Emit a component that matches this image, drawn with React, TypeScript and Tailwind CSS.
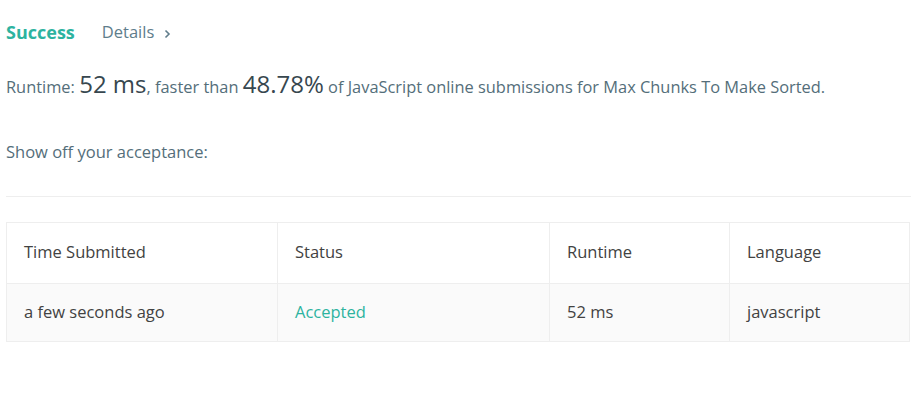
export default function App() {
  const cols = [
    { label: 'Time Submitted', value: 'a few seconds ago', w: 'w-[270px]' },
    { label: 'Status', value: 'Accepted', w: 'w-[272px]', accent: true },
    { label: 'Runtime', value: '52 ms', w: 'w-[180px]' },
    { label: 'Language', value: 'javascript', w: 'flex-1' },
  ]

  return (
    <div className="min-h-screen bg-white px-[6px] pt-[19px] font-['Open_Sans',sans-serif] text-[#546e7a]">
      <div className="flex items-center gap-[27px]">
        <span className="text-[18px] font-bold text-[#2db39f]">Success</span>
        <span className="flex items-center gap-[10px] text-[16.5px] text-[#607d8b]">
          Details
          <svg width="7" height="10" viewBox="0 0 7 10" className="mt-[2px]">
            <path d="M1.5 1.5 L5 5 L1.5 8.5" fill="none" stroke="#607d8b" strokeWidth="1.6" />
          </svg>
        </span>
      </div>

      <p className="mt-[23px] text-[16.4px] leading-[30px]">
        Runtime: <span className="text-[24px] text-[#37474f]">52 ms</span>, faster than{' '}
        <span className="text-[24px] text-[#37474f]">48.78%</span> of JavaScript online submissions for Max
        Chunks To Make Sorted.
      </p>

      <p className="mt-[38px] text-[16.5px]">Show off your acceptance:</p>

      <div className="mt-[31px] mr-[5px] border-t border-[#eeeeee]" />

      <div className="mt-[25px] mr-[6px] flex flex-col border border-[#eeeeee] text-[16.5px] text-[#424242]">
        <div className="flex h-[60px]">
          {cols.map((c, i) => (
            <div
              key={c.label}
              className={`${c.w} flex items-center pl-[17px] ${i > 0 ? 'border-l border-[#eeeeee]' : ''}`}
            >
              {c.label}
            </div>
          ))}
        </div>
        <div className="flex h-[58px] border-t border-[#eeeeee] bg-[#fafafa]">
          {cols.map((c, i) => (
            <div
              key={c.label}
              className={`${c.w} flex items-center pl-[17px] ${i > 0 ? 'border-l border-[#eeeeee]' : ''} ${
                c.accent ? 'text-[#2db39f]' : ''
              }`}
            >
              {c.value}
            </div>
          ))}
        </div>
      </div>
    </div>
  )
}
